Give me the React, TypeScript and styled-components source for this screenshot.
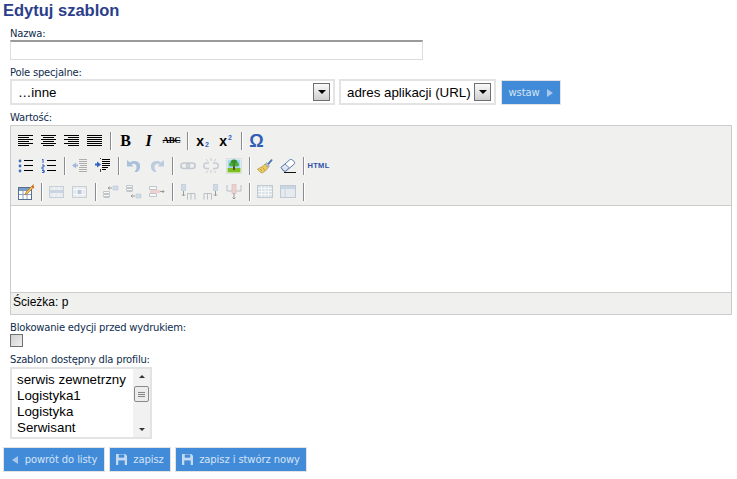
import React from "react";
import styled, { createGlobalStyle } from "styled-components";

const GlobalStyle = createGlobalStyle`
  html, body {
    margin: 0;
    padding: 0;
    background: #fff;
  }
`;

type IconName =
  | "alignLeft" | "alignCenter" | "alignRight" | "alignFull"
  | "bullets" | "numbers" | "outdent" | "indent" | "undo" | "redo"
  | "link" | "unlink" | "image" | "brush" | "eraser"
  | "tableEdit" | "rowProps" | "cellProps"
  | "rowBefore" | "rowAfter" | "rowDelete"
  | "colBefore" | "colAfter" | "colDelete"
  | "split" | "merge";

const lines = (rows: [number, number][], color: string) =>
  rows.map(([a, b], i) => (
    <rect key={i} x={a} y={2 + i * 2} width={b - a} height={1} fill={color} />
  ));

const textLines = (rows: [number, number, number][], color: string) =>
  rows.map(([a, b, y], i) => (
    <rect key={i} x={a} y={y} width={b - a} height={1} fill={color} />
  ));

const Draw: Record<IconName, React.ReactNode> = {
  alignLeft: lines([[0, 15], [0, 11], [0, 15], [0, 11], [0, 15], [0, 11]], "#000"),
  alignCenter: lines([[0, 15], [2, 13], [0, 15], [2, 13], [0, 15], [2, 13]], "#000"),
  alignRight: lines([[0, 15], [4, 15], [0, 15], [4, 15], [0, 15], [4, 15]], "#000"),
  alignFull: lines([[0, 15], [0, 15], [0, 15], [0, 15], [0, 15], [0, 15]], "#000"),
  bullets: (
    <>
      <circle cx="2" cy="3" r="1.400" fill="#3a6fc0" />
      <circle cx="2" cy="8" r="1.400" fill="#3a6fc0" />
      <circle cx="2" cy="13" r="1.400" fill="#3a6fc0" />
      <rect x="6" y="2" width="9" height="1" />
      <rect x="6" y="7" width="9" height="1" />
      <rect x="6" y="12" width="9" height="1" />
    </>
  ),
  numbers: (
    <>
      <path d="M2 1v4M1 1.500h1M1 7h2v2H1v2h2M1 12.500h2v2H1M3 12.500v2" stroke="#2f62c4" strokeWidth="1" fill="none" />
      <rect x="6" y="2" width="9" height="1" />
      <rect x="6" y="7" width="9" height="1" />
      <rect x="6" y="12" width="9" height="1" />
    </>
  ),
  outdent: (
    <g opacity="0.42">
      <path d="M0 7.500l4-3v2h2v2H4v2z" fill="#3a6fc0" />
      {textLines([[7, 15, 1], [7, 15, 3], [7, 15, 5], [8, 15, 7], [7, 15, 9], [7, 15, 11], [7, 15, 13]], "#555")}
    </g>
  ),
  indent: (
    <>
      <path d="M6 6.500L2 3.500v2H0v2h2v2z" fill="#2f62c4" />
      {textLines([[7, 15, 1], [7, 15, 3], [7, 15, 5], [7, 15, 7], [7, 13, 9], [7, 11, 11]], "#000")}
      <rect x="5" y="0" width="1" height="1" fill="#444" />
      <rect x="5" y="11" width="1" height="3" fill="#444" />
    </>
  ),
  undo: (
    <path d="M1 2v6.500h6.500L5.500 6.500c2-1.500 5-.5 5 2.500 0 2-1 3.500-2 5h2.500c2.500-1.500 3.500-4.500 3-7C13.500 3.500 8 1.500 4 4.500z" fill="#a9c0dc" />
  ),
  redo: (
    <path d="M15 2v6.500H8.500l2-2c-2-1.500-5-.5-5 2.500 0 2 1 3.500 2 5H5c-2.500-1.500-3.500-4.500-3-7C2.500 3.500 8 1.500 12 4.500z" fill="#bccce0" />
  ),
  link: (
    <g fill="none" stroke="#c3c9d2" strokeWidth="1.700">
      <rect x="0.900" y="5" width="8.500" height="5.500" rx="2.700" />
      <rect x="6.600" y="5" width="8.500" height="5.500" rx="2.700" />
    </g>
  ),
  unlink: (
    <g fill="none" stroke="#c7ccd4" strokeWidth="1.500">
      <path d="M6 5H3.500a2.700 2.700 0 000 5.500H6M10 5h2.500a2.700 2.700 0 010 5.500H10" />
      <path d="M8 0v3M8 12v3M3 1l2 2.500M13 1l-2 2.500M3 15l2-2.500M13 15l-2-2.500" strokeWidth="1" />
    </g>
  ),
  image: (
    <>
      <rect x="0.500" y="0.500" width="15" height="15" fill="#fff" stroke="#ddd" />
      <rect x="1.500" y="1.500" width="13" height="9" fill="#a3d8f4" />
      <rect x="1.500" y="10" width="13" height="4.500" fill="#7cc01f" />
      <rect x="7" y="7" width="2" height="5" fill="#6b4a20" />
      <circle cx="8" cy="5" r="3.500" fill="#3a8f2a" />
      <circle cx="5" cy="6.500" r="2" fill="#4fae38" />
      <circle cx="11" cy="6.500" r="2" fill="#4fae38" />
    </>
  ),
  brush: (
    <>
      <path d="M10 6l4-4.500c1-.8 2 .2 1.300 1.200L11 7.500z" fill="#4a72ad" />
      <path d="M9.500 4.500l3 3.500-1.500 1.500-3-3z" fill="#b9c5d4" stroke="#7a8796" strokeWidth="0.500" />
      <path d="M8 6l3 3.500c-1 2.500-3.500 4.500-6 5.500-1.500-.5-3.500-2-4.500-4C2.500 10 6 8.500 8 6z" fill="#edc95e" stroke="#8f7a3c" strokeWidth="0.500" />
      <path d="M3 11l2 2M5.500 9.500l2.500 3" stroke="#a98b3a" strokeWidth="0.700" />
    </>
  ),
  eraser: (
    <>
      <path d="M1 9.500L9.500 2c1-.8 2-.8 3 0l1.500 1.500c.8 1 .8 2 0 2.800L6 13H3.500z" fill="#fff" stroke="#5578a8" strokeWidth="1" />
      <path d="M1 9.500L4 13h2L9 9.500 5 6z" fill="#dfe6f0" stroke="#5578a8" strokeWidth="0.800" />
      <rect x="4" y="14" width="12" height="1" fill="#111" />
    </>
  ),
  tableEdit: (
    <>
      <rect x="0.500" y="3.500" width="13" height="12" fill="#fff" stroke="#56708f" />
      <rect x="1" y="4" width="12" height="3" fill="#7d9cc4" />
      <path d="M1 10.500h12M5 7v8M9 7v8" stroke="#8ea4c0" strokeWidth="1" />
      <path d="M7 11l1-3 7-7c1-.7 2 .3 1.300 1.300L9.500 9.500z" fill="#f2c04a" stroke="#a8682a" strokeWidth="0.600" />
      <path d="M14 2l2 2" stroke="#d8542c" strokeWidth="1.500" />
    </>
  ),
  rowProps: (
    <g opacity="0.5">
      <rect x="0.500" y="2.500" width="14" height="11" fill="#dfe6ee" stroke="#a0b2c6" />
      <rect x="1" y="6" width="13" height="3" fill="#a5bcd6" />
      <path d="M5 9v4M10 9v4M5 3v3M10 3v3" stroke="#fff" strokeWidth="1" />
    </g>
  ),
  cellProps: (
    <g opacity="0.5">
      <rect x="0.500" y="2.500" width="14" height="11" fill="#dfe6ee" stroke="#a0b2c6" />
      <rect x="5" y="6" width="5" height="4" fill="#7f9ec4" />
      <path d="M1 5.500h13M1 10.500h13M5 3v10M10 3v10" stroke="#fff" strokeWidth="1" />
    </g>
  ),
  rowBefore: (
    <g opacity="0.55">
      <path d="M.5 7.500h6v2h-6zM.5 10.500h6v2h-6zM.5 13.500h6" fill="#fff" stroke="#99a4ae" strokeWidth="1" />
      <rect x="10" y="2" width="5" height="4" fill="#b4cbe4" stroke="#88a0bb" strokeWidth="0.500" />
      <path d="M9 4H5M6.500 2.500L5 4l1.500 1.500" stroke="#555" strokeWidth="1" fill="none" />
    </g>
  ),
  rowAfter: (
    <g opacity="0.55">
      <path d="M.5 1.500h6v2h-6zM.5 4.500h6v2h-6zM.5 7.500h6" fill="#fff" stroke="#99a4ae" strokeWidth="1" />
      <rect x="10" y="10" width="5" height="4" fill="#b4cbe4" stroke="#88a0bb" strokeWidth="0.500" />
      <path d="M9 12H5M6.500 10.500L5 12l1.500 1.500" stroke="#555" strokeWidth="1" fill="none" />
    </g>
  ),
  rowDelete: (
    <g opacity="0.55">
      <path d="M.5 2.500h7v3h-7zM.5 9.500h7v3h-7z" fill="#fff" stroke="#99a4ae" strokeWidth="1" />
      <rect x="1" y="6" width="10" height="3" fill="#eeb6bb" />
      <path d="M11 7.500h4M13.500 6l1.500 1.500L13.500 9" stroke="#555" strokeWidth="1" fill="none" />
    </g>
  ),
  colBefore: (
    <g opacity="0.55">
      <rect x="1.500" y="0.500" width="4" height="6" fill="#b4cbe4" stroke="#88a0bb" strokeWidth="0.600" />
      <path d="M3.500 7v5M2 10.500l1.500 1.500L5 10.500" stroke="#555" strokeWidth="1" fill="none" />
      <path d="M7.500 15.500v-6h7.500M11 9.500v6M15 9.500v6" fill="none" stroke="#8f9aa4" strokeWidth="1" />
    </g>
  ),
  colAfter: (
    <g opacity="0.55">
      <rect x="10.500" y="0.500" width="4" height="6" fill="#b4cbe4" stroke="#88a0bb" strokeWidth="0.600" />
      <path d="M12.500 7v5M11 10.500l1.500 1.500 1.500-1.500" stroke="#555" strokeWidth="1" fill="none" />
      <path d="M1 9.500h7.500v6M1 15.500v-6M4.500 9.500v6" fill="none" stroke="#8f9aa4" strokeWidth="1" />
    </g>
  ),
  colDelete: (
    <g opacity="0.55">
      <rect x="6" y="0.500" width="4" height="9" fill="#eeb6bb" stroke="#cc9097" strokeWidth="0.600" />
      <path d="M8 9v6M6.500 13.500L8 15l1.500-1.500" stroke="#555" strokeWidth="1" fill="none" />
      <path d="M1 1v6h5M15 1v6h-5" fill="none" stroke="#8f9aa4" strokeWidth="1" />
    </g>
  ),
  split: (
    <g opacity="0.55">
      <rect x="0.500" y="1.500" width="15" height="12" fill="#c7d5e5" stroke="#9aaabb" />
      <path d="M1 4.500h14M1 7.500h14M1 10.500h14M4.500 2v11M8 2v11M11.500 2v11" stroke="#fff" strokeWidth="1" />
    </g>
  ),
  merge: (
    <g opacity="0.55">
      <rect x="0.500" y="1.500" width="15" height="12" fill="#dfe8f2" stroke="#9aaabb" />
      <rect x="1" y="2" width="14" height="3" fill="#a9c0da" />
      <path d="M5 5v8" stroke="#a9bdd4" strokeWidth="1" />
    </g>
  ),
};

const Page = styled.div`
  width: 737px;
  height: 479px;
  overflow: hidden;
  background: #fff;
  box-sizing: border-box;
  padding: 1px 0 0 3px;
  font-family: "DejaVu Sans", Verdana, sans-serif;
`;

const Title = styled.h1`
  margin: 0;
  font-family: "Liberation Sans", Arial, sans-serif;
  font-size: 16.5px;
  line-height: 19px;
  font-weight: bold;
  color: #2b3e8b;
`;

const Form = styled.form`
  margin: 0;
  padding: 0 0 0 7px;
  display: flex;
  flex-direction: column;
`;

const Label = styled.label<{ $top: number }>`
  display: block;
  font-size: 10px;
  line-height: 11px;
  letter-spacing: -0.2px;
  color: #0f2d4d;
  margin-top: ${(p) => p.$top}px;
`;

const TextInput = styled.input`
  display: block;
  box-sizing: border-box;
  width: 413px;
  height: 20px;
  padding: 0 4px;
  margin-top: 1px;
  background: #fff;
  border: 1px solid #dcdcdc;
  border-top: 2px solid #9a9a9a;
  outline: none;
`;

const SelectRow = styled.div`
  display: flex;
  align-items: flex-start;
  margin-top: 1px;
`;

const SelectBox = styled.div<{ $width: number; $pad: number; $gap: number }>`
  box-sizing: border-box;
  width: ${(p) => p.$width}px;
  height: 26px;
  margin-right: ${(p) => p.$gap}px;
  padding: 0 3px 0 ${(p) => p.$pad}px;
  display: flex;
  align-items: center;
  justify-content: space-between;
  border: 2px solid #e3e3e3;
  font-family: "Liberation Sans", Arial, sans-serif;
  font-size: 13.33px;
  white-space: nowrap;
  color: #000;
`;

const DropArrow = styled.span`
  box-sizing: border-box;
  width: 17px;
  height: 18px;
  display: flex;
  align-items: center;
  justify-content: center;
  border: 1px solid #6f6f6f;
  background: linear-gradient(#fafafa, #cfcfcf);
  flex-shrink: 0;

  &::after {
    content: "";
    border-left: 4px solid transparent;
    border-right: 4px solid transparent;
    border-top: 4px solid #000;
  }
`;

const ActionButton = styled.button<{ $width: number }>`
  box-sizing: border-box;
  width: ${(p) => p.$width}px;
  height: 25px;
  padding: 0;
  display: inline-flex;
  align-items: center;
  justify-content: center;
  gap: 6px;
  background: #428bd8;
  border: 1px solid #e3e3e3;
  border-radius: 0;
  color: #d5e4f5;
  font-family: "DejaVu Sans", Verdana, sans-serif;
  font-size: 10px;
  letter-spacing: -0.1px;
  white-space: nowrap;
`;

const InsertButton = styled(ActionButton)`
  margin-top: 1px;
`;

const Editor = styled.div`
  box-sizing: border-box;
  width: 722px;
  height: 190px;
  margin-top: 2px;
  border: 1px solid #cccccc;
  display: flex;
  flex-direction: column;
`;

const Toolbar = styled.div`
  height: 80px;
  background: #f0f0ee;
  border-bottom: 1px solid #cccccc;
  padding: 2px 0 0 3px;
  box-sizing: border-box;
  display: flex;
  flex-direction: column;
`;

const ToolRow = styled.div<{ $height: number }>`
  height: ${(p) => p.$height}px;
  display: flex;
  align-items: center;
`;

const ToolButton = styled.span`
  width: 23px;
  height: 20px;
  display: flex;
  align-items: center;
  justify-content: center;
  color: #000;
  font-family: "Liberation Serif", serif;
  line-height: 1;
  flex-shrink: 0;
`;

const Sep = styled.span`
  width: 8px;
  height: 18px;
  display: flex;
  justify-content: center;
  flex-shrink: 0;

  &::after {
    content: "";
    width: 1px;
    height: 100%;
    background: #8b8b93;
    box-shadow: 1px 0 0 #fff;
  }
`;

const Bold = styled.b`
  font-size: 16px;
`;

const Ital = styled.b`
  font-size: 16px;
  font-style: italic;
`;

const Strike = styled.b`
  font-size: 9px;
  letter-spacing: -0.4px;
  text-decoration: line-through;
`;

const ScriptX = styled.b<{ $up?: boolean }>`
  font-family: "Liberation Sans", Arial, sans-serif;
  font-size: 14px;
  display: flex;
  align-items: ${(p) => (p.$up ? "flex-start" : "flex-end")};

  small {
    font-size: 7px;
    color: #2f62c4;
    line-height: 1;
    margin-left: 1px;
  }
`;

const Omega = styled.b`
  font-family: "Liberation Sans", Arial, sans-serif;
  font-size: 18px;
  color: #2f5fb5;
`;

const HtmlMark = styled.b`
  font-family: "Liberation Sans", Arial, sans-serif;
  font-size: 7.5px;
  letter-spacing: 0.3px;
  color: #2c52a8;
`;

const EditArea = styled.div`
  flex: 1;
  background: #fff;
`;

const StatusBar = styled.div`
  height: 22px;
  box-sizing: border-box;
  padding: 2px 0 0 2px;
  background: #f0f0ee;
  border-top: 1px solid #cccccc;
  font-family: "Liberation Sans", Arial, sans-serif;
  font-size: 12px;
  line-height: 15px;
  color: #000;
`;

const Checkbox = styled.span`
  display: block;
  box-sizing: border-box;
  width: 13px;
  height: 13px;
  margin-top: 1px;
  border: 1px solid #707070;
  background: linear-gradient(135deg, #cfcfcf, #f0f0f0);
`;

const ListBox = styled.div`
  box-sizing: border-box;
  width: 142px;
  height: 72px;
  margin-top: 2px;
  border: 2px solid #e3e3e3;
  display: flex;
  justify-content: space-between;
`;

const ListItems = styled.ul`
  margin: 0;
  padding: 3px 0 0 5px;
  list-style: none;
  font-family: "Liberation Sans", Arial, sans-serif;
  font-size: 13.33px;
  line-height: 16px;
  color: #000;
`;

const ScrollTrack = styled.div`
  width: 17px;
  background: #f1f1f1;
  display: flex;
  flex-direction: column;
  align-items: center;
  justify-content: space-between;
  padding: 6px 0;
  box-sizing: border-box;
  position: relative;
`;

const ScrollArrow = styled.span<{ $up?: boolean }>`
  border-left: 3px solid transparent;
  border-right: 3px solid transparent;
  ${(p) => (p.$up ? "border-bottom: 3px solid #333;" : "border-top: 3px solid #333;")}
`;

const ScrollThumb = styled.span`
  position: absolute;
  top: 17px;
  left: 1px;
  box-sizing: border-box;
  width: 15px;
  height: 16px;
  border: 1px solid #8a8a8a;
  border-radius: 2px;
  background: repeating-linear-gradient(#e8e8e8 0 1px, #888 1px 2px) center / 7px 7px no-repeat, #ececec;
`;

const Footer = styled.div`
  display: flex;
  margin: 8px 0 0 -7px;
  gap: 4px;
`;

const Icon = ({ name, size = 16 }: { name: IconName; size?: number }) => (
  <svg width={size} height={size} viewBox="0 0 16 16">
    {Draw[name]}
  </svg>
);

const ArrowGlyph = ({ left }: { left?: boolean }) => (
  <svg width="8" height="10" viewBox="0 0 8 10">
    <path d={left ? "M7 1v8L1 5z" : "M1 1v8l6-4z"} fill="#a8c8ec" />
  </svg>
);

const SaveGlyph = () => (
  <svg width="11" height="11" viewBox="0 0 12 12">
    <path d="M0 0h10l2 2v10H0z" fill="#c5daf1" />
    <rect x="3" y="0.500" width="6" height="3.500" fill="#428bd8" />
    <rect x="2.500" y="7" width="7" height="5" fill="#428bd8" />
  </svg>
);

const tool = (name: IconName) => (
  <ToolButton key={name}>
    <Icon name={name} />
  </ToolButton>
);

export default function App() {
  return (
    <Page>
      <GlobalStyle />
      <Title>Edytuj szablon</Title>
      <Form>
        <Label $top={8}>Nazwa:</Label>
        <TextInput type="text" />

        <Label $top={7}>Pole specjalne:</Label>
        <SelectRow>
          <SelectBox $width={325} $pad={6} $gap={4}>
            …inne
            <DropArrow />
          </SelectBox>
          <SelectBox $width={157} $pad={6} $gap={5}>
            adres aplikacji (URL)
            <DropArrow />
          </SelectBox>
          <InsertButton type="button" $width={60}>
            wstaw
            <ArrowGlyph />
          </InsertButton>
        </SelectRow>

        <Label $top={7}>Wartość:</Label>
        <Editor>
          <Toolbar>
            <ToolRow $height={25}>
              {tool("alignLeft")}
              {tool("alignCenter")}
              {tool("alignRight")}
              {tool("alignFull")}
              <Sep />
              <ToolButton><Bold>B</Bold></ToolButton>
              <ToolButton><Ital>I</Ital></ToolButton>
              <ToolButton><Strike>ABC</Strike></ToolButton>
              <Sep />
              <ToolButton><ScriptX>x<small>2</small></ScriptX></ToolButton>
              <ToolButton><ScriptX $up>x<small>2</small></ScriptX></ToolButton>
              <Sep />
              <ToolButton><Omega>Ω</Omega></ToolButton>
            </ToolRow>
            <ToolRow $height={26}>
              {tool("bullets")}
              {tool("numbers")}
              <Sep />
              {tool("outdent")}
              {tool("indent")}
              <Sep />
              {tool("undo")}
              {tool("redo")}
              <Sep />
              {tool("link")}
              {tool("unlink")}
              {tool("image")}
              <Sep />
              {tool("brush")}
              {tool("eraser")}
              <Sep />
              <ToolButton><HtmlMark>HTML</HtmlMark></ToolButton>
            </ToolRow>
            <ToolRow $height={25}>
              {tool("tableEdit")}
              <Sep />
              {tool("rowProps")}
              {tool("cellProps")}
              <Sep />
              {tool("rowBefore")}
              {tool("rowAfter")}
              {tool("rowDelete")}
              <Sep />
              {tool("colBefore")}
              {tool("colAfter")}
              {tool("colDelete")}
              <Sep />
              {tool("split")}
              {tool("merge")}
              <Sep />
            </ToolRow>
          </Toolbar>
          <EditArea />
          <StatusBar>Ścieżka: p</StatusBar>
        </Editor>

        <Label $top={7}>Blokowanie edycji przed wydrukiem:</Label>
        <Checkbox />

        <Label $top={7}>Szablon dostępny dla profilu:</Label>
        <ListBox>
          <ListItems>
            <li>serwis zewnetrzny</li>
            <li>Logistyka1</li>
            <li>Logistyka</li>
            <li>Serwisant</li>
          </ListItems>
          <ScrollTrack>
            <ScrollArrow $up />
            <ScrollThumb />
            <ScrollArrow />
          </ScrollTrack>
        </ListBox>

        <Footer>
          <ActionButton type="button" $width={102}>
            <ArrowGlyph left />
            powrót do listy
          </ActionButton>
          <ActionButton type="button" $width={62}>
            <SaveGlyph />
            zapisz
          </ActionButton>
          <ActionButton type="button" $width={132}>
            <SaveGlyph />
            zapisz i stwórz nowy
          </ActionButton>
        </Footer>
      </Form>
    </Page>
  );
}
